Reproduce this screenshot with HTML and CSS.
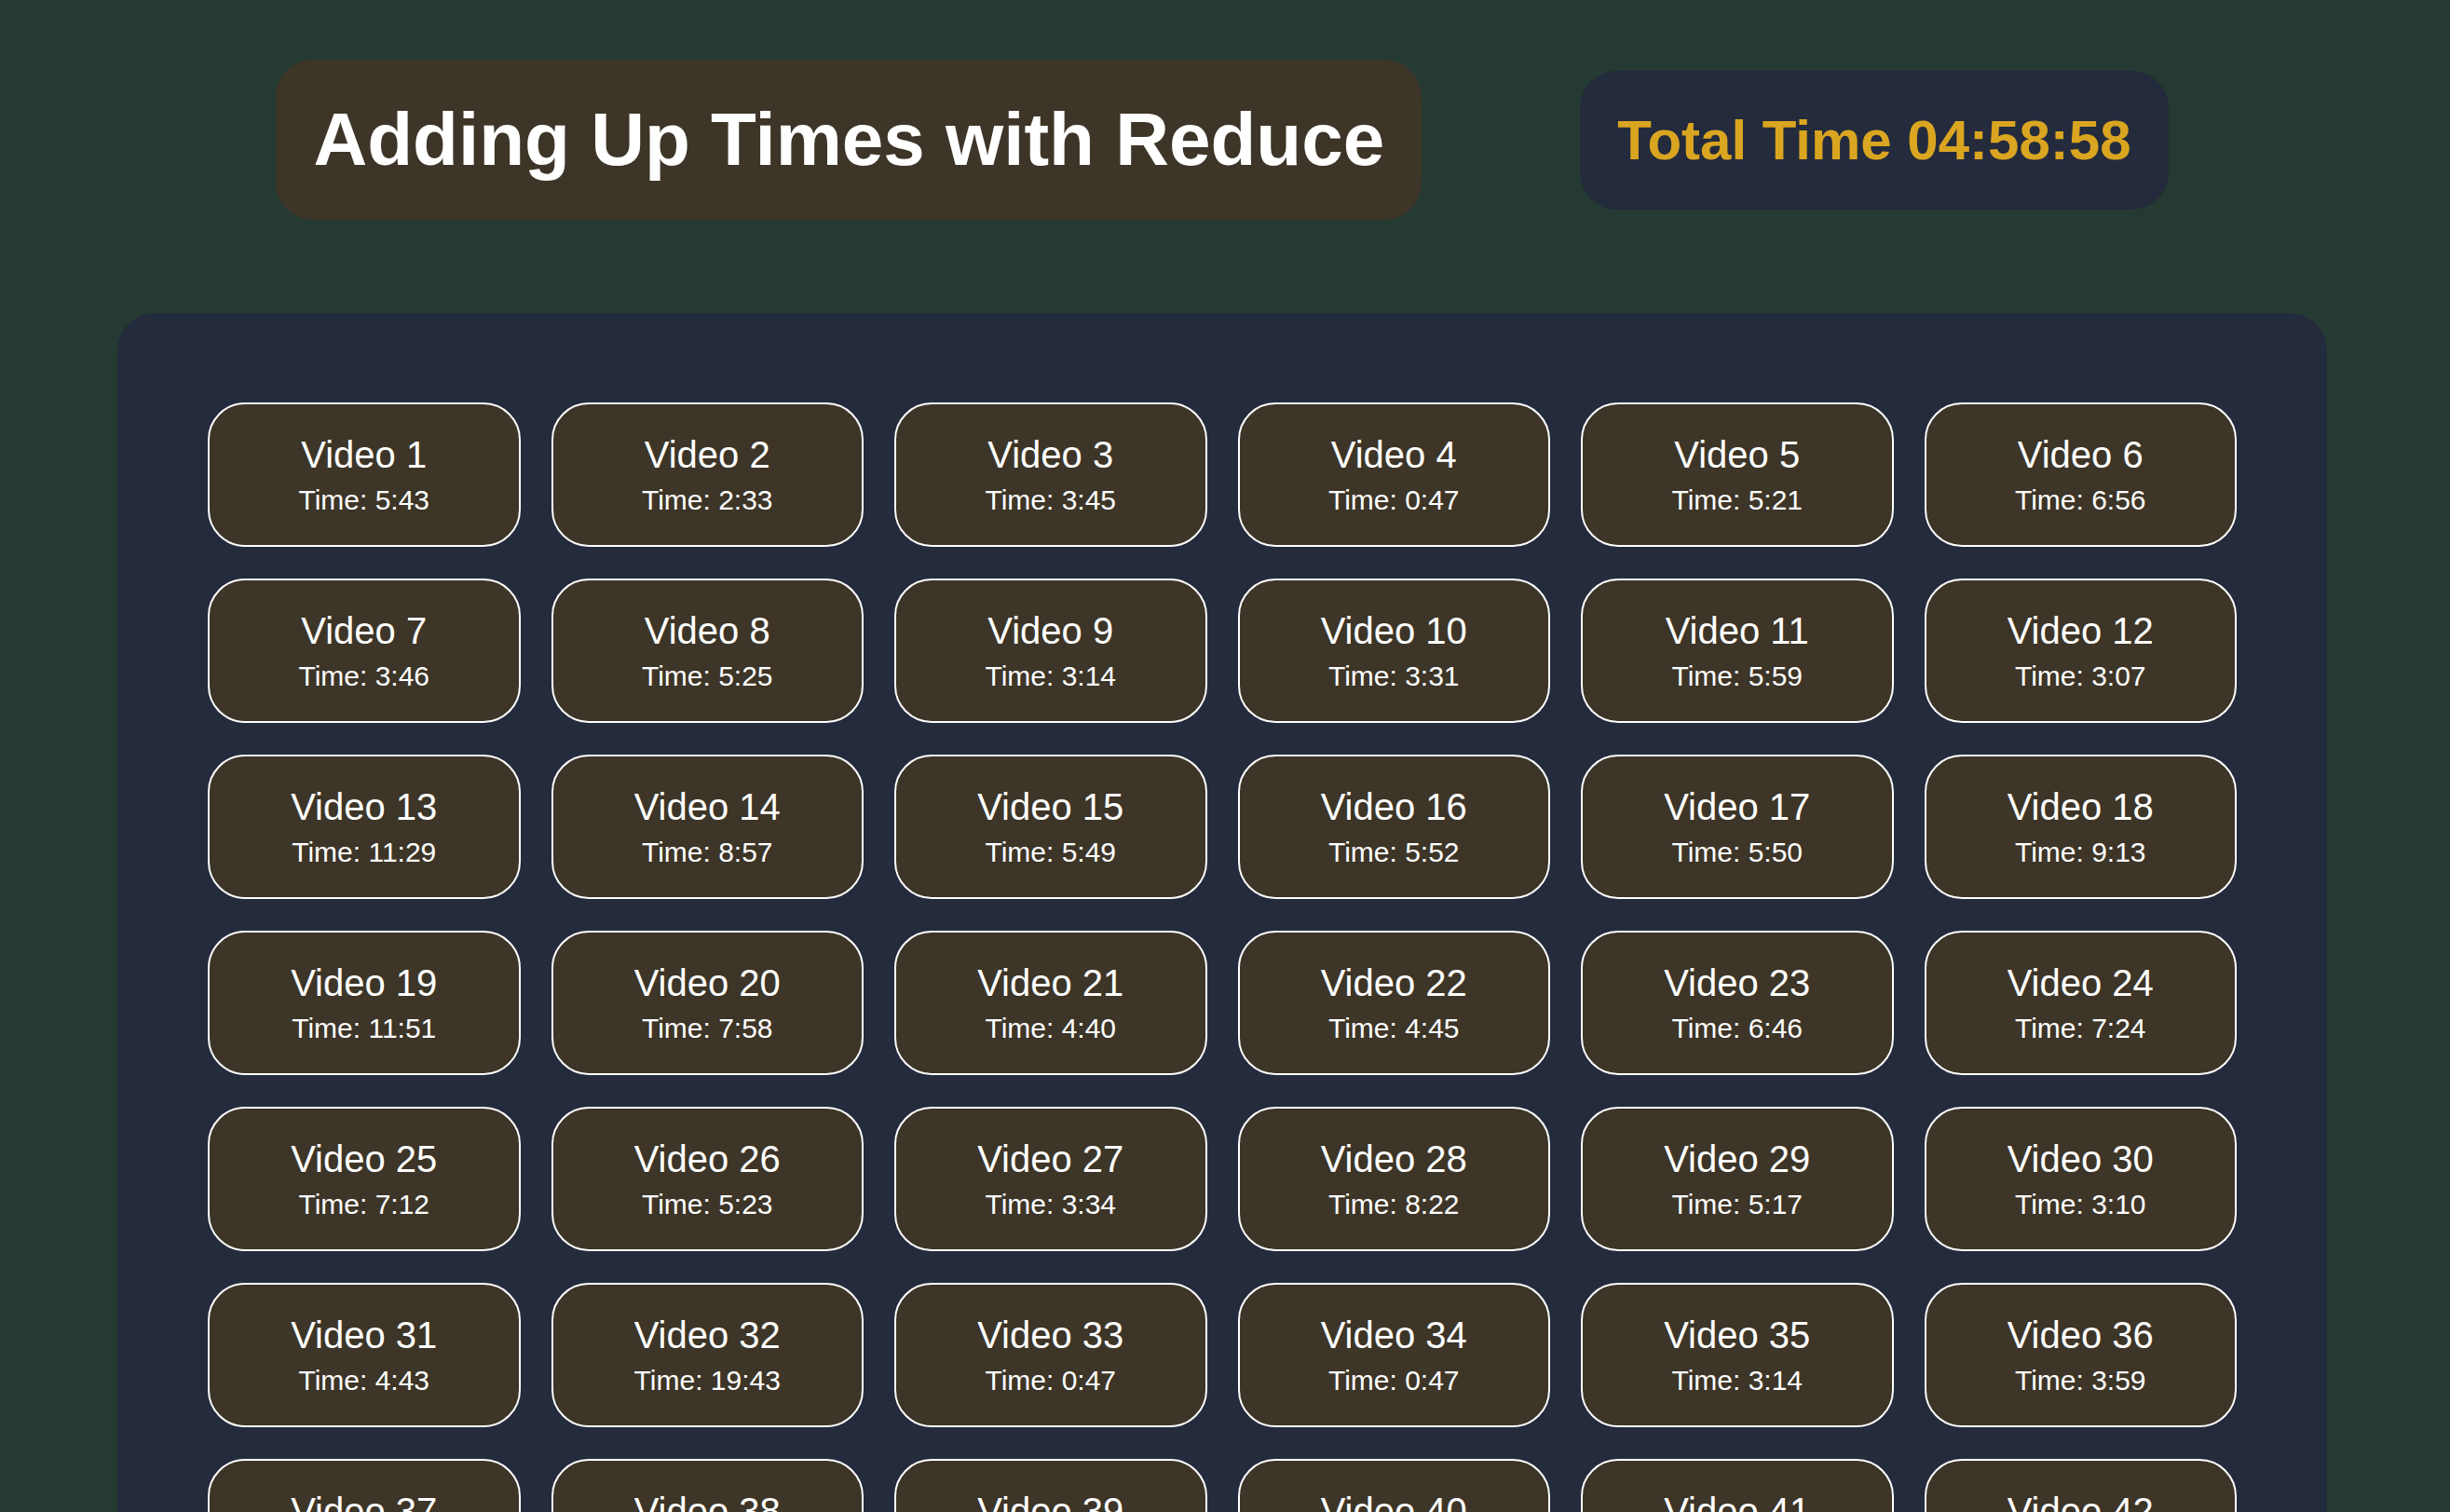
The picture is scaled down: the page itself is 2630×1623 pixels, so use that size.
FILE: index.html
```html
<!DOCTYPE html>
<html lang="en">
<head>
<meta charset="utf-8">
<title>Adding Up Times with Reduce</title>
<link rel="stylesheet" href="styles.css">
</head>
<body>
<header class="header">
  <h1 class="title">Adding Up Times with Reduce</h1>
  <div class="total">Total Time 04:58:58</div>
</header>
<main class="panel">
  <ul class="videos">
    <li class="video"><span class="name">Video 1</span><span class="time">Time: 5:43</span></li>
    <li class="video"><span class="name">Video 2</span><span class="time">Time: 2:33</span></li>
    <li class="video"><span class="name">Video 3</span><span class="time">Time: 3:45</span></li>
    <li class="video"><span class="name">Video 4</span><span class="time">Time: 0:47</span></li>
    <li class="video"><span class="name">Video 5</span><span class="time">Time: 5:21</span></li>
    <li class="video"><span class="name">Video 6</span><span class="time">Time: 6:56</span></li>
    <li class="video"><span class="name">Video 7</span><span class="time">Time: 3:46</span></li>
    <li class="video"><span class="name">Video 8</span><span class="time">Time: 5:25</span></li>
    <li class="video"><span class="name">Video 9</span><span class="time">Time: 3:14</span></li>
    <li class="video"><span class="name">Video 10</span><span class="time">Time: 3:31</span></li>
    <li class="video"><span class="name">Video 11</span><span class="time">Time: 5:59</span></li>
    <li class="video"><span class="name">Video 12</span><span class="time">Time: 3:07</span></li>
    <li class="video"><span class="name">Video 13</span><span class="time">Time: 11:29</span></li>
    <li class="video"><span class="name">Video 14</span><span class="time">Time: 8:57</span></li>
    <li class="video"><span class="name">Video 15</span><span class="time">Time: 5:49</span></li>
    <li class="video"><span class="name">Video 16</span><span class="time">Time: 5:52</span></li>
    <li class="video"><span class="name">Video 17</span><span class="time">Time: 5:50</span></li>
    <li class="video"><span class="name">Video 18</span><span class="time">Time: 9:13</span></li>
    <li class="video"><span class="name">Video 19</span><span class="time">Time: 11:51</span></li>
    <li class="video"><span class="name">Video 20</span><span class="time">Time: 7:58</span></li>
    <li class="video"><span class="name">Video 21</span><span class="time">Time: 4:40</span></li>
    <li class="video"><span class="name">Video 22</span><span class="time">Time: 4:45</span></li>
    <li class="video"><span class="name">Video 23</span><span class="time">Time: 6:46</span></li>
    <li class="video"><span class="name">Video 24</span><span class="time">Time: 7:24</span></li>
    <li class="video"><span class="name">Video 25</span><span class="time">Time: 7:12</span></li>
    <li class="video"><span class="name">Video 26</span><span class="time">Time: 5:23</span></li>
    <li class="video"><span class="name">Video 27</span><span class="time">Time: 3:34</span></li>
    <li class="video"><span class="name">Video 28</span><span class="time">Time: 8:22</span></li>
    <li class="video"><span class="name">Video 29</span><span class="time">Time: 5:17</span></li>
    <li class="video"><span class="name">Video 30</span><span class="time">Time: 3:10</span></li>
    <li class="video"><span class="name">Video 31</span><span class="time">Time: 4:43</span></li>
    <li class="video"><span class="name">Video 32</span><span class="time">Time: 19:43</span></li>
    <li class="video"><span class="name">Video 33</span><span class="time">Time: 0:47</span></li>
    <li class="video"><span class="name">Video 34</span><span class="time">Time: 0:47</span></li>
    <li class="video"><span class="name">Video 35</span><span class="time">Time: 3:14</span></li>
    <li class="video"><span class="name">Video 36</span><span class="time">Time: 3:59</span></li>
    <li class="video"><span class="name">Video 37</span><span class="time">Time: 2:43</span></li>
    <li class="video"><span class="name">Video 38</span><span class="time">Time: 4:17</span></li>
    <li class="video"><span class="name">Video 39</span><span class="time">Time: 6:56</span></li>
    <li class="video"><span class="name">Video 40</span><span class="time">Time: 3:05</span></li>
    <li class="video"><span class="name">Video 41</span><span class="time">Time: 3:03</span></li>
    <li class="video"><span class="name">Video 42</span><span class="time">Time: 5:26</span></li>
  </ul>
</main>
</body>
</html>
```

FILE: styles.css
```css
html {
  overflow: hidden;
}

body {
  margin: 0;
  padding: 64px 6px 0 0;
  background: #253a33;
  font-family: "Liberation Sans", Arial, sans-serif;
  color: #ffffff;
}

.header {
  display: flex;
  justify-content: center;
  align-items: center;
  gap: 170px;
}

.title {
  margin: 0;
  padding: 40px;
  background: #3d3527;
  border-radius: 40px;
  font-size: 80px;
  font-weight: 700;
  line-height: normal;
  color: #ffffff;
}

.total {
  padding: 40px;
  background: #242b3c;
  border-radius: 40px;
  font-size: 60px;
  font-weight: 700;
  color: #daa520;
}

.panel {
  width: 2372px;
  box-sizing: border-box;
  margin: 100px auto 0;
  padding: 96px 97px;
  background: #242b3c;
  border-radius: 40px;
}

.videos {
  list-style: none;
  margin: 0;
  padding: 0;
  display: grid;
  grid-template-columns: repeat(6, 1fr);
  column-gap: 33px;
  row-gap: 34px;
}

.video {
  display: flex;
  flex-direction: column;
  align-items: center;
  justify-content: center;
  height: 155px;
  box-sizing: border-box;
  border: 2px solid #ffffff;
  border-radius: 40px;
  background: #3d3527;
  text-align: center;
}

.name {
  font-size: 40px;
  line-height: 46px;
}

.time {
  margin-top: 9px;
  font-size: 30px;
  line-height: 34px;
}
```
